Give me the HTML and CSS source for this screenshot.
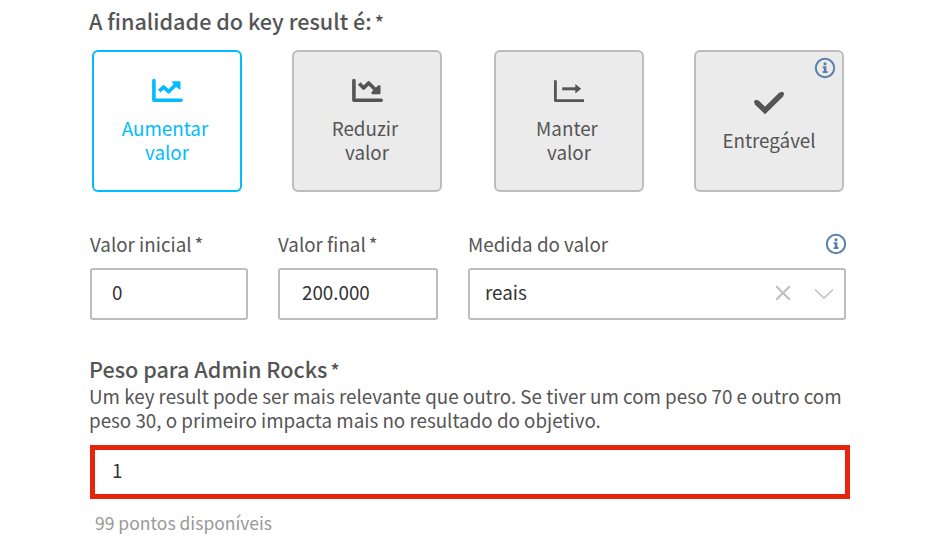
FILE: index.html
```html
<!DOCTYPE html>
<html lang="pt-BR">
<head>
    <meta charset="UTF-8">
    <meta name="viewport" content="width=device-width, initial-scale=1.0">
    <title>Key result</title>
    <link rel="stylesheet" href="styles.css">
</head>
<body>

<form class="form">
    <h2 class="title">A finalidade do key result é:<span class="required">*</span></h2>

    <div class="cards">
        <button type="button" class="card active">
            <svg class="card-icon" width="32" height="26" viewBox="0 0 32 26">
                <path d="M2.9 2.5V22.2H30.2" fill="none" stroke="currentColor" stroke-width="3.6" stroke-linecap="round" stroke-linejoin="round"/>
                <path d="M8.2 13.2L12.6 9L17.6 13.7L25 6.4" fill="none" stroke="currentColor" stroke-width="3.7" stroke-linejoin="round"/>
                <path d="M20.7 3.2H28.6Q29.5 3.2 29.5 4.1V12L26.2 9.8L22.6 6.2Z" fill="currentColor"/>
            </svg>
            <span class="card-label"><span class="word">Aumentar</span><span>valor</span></span>
        </button>
        <button type="button" class="card">
            <svg class="card-icon" width="32" height="26" viewBox="0 0 32 26">
                <path d="M2.9 2.5V22.2H30.2" fill="none" stroke="currentColor" stroke-width="3.6" stroke-linecap="round" stroke-linejoin="round"/>
                <path d="M8.2 5.5L12.6 10L17.6 5L25.5 12.8" fill="none" stroke="currentColor" stroke-width="3.7" stroke-linejoin="round"/>
                <path d="M29.5 7.3V15.3Q29.5 16.2 28.6 16.2H20.6V14L27 7.6Z" fill="currentColor"/>
            </svg>
            <span class="card-label"><span class="word">Reduzir</span><span>valor</span></span>
        </button>
        <button type="button" class="card">
            <svg class="card-icon" width="32" height="26" viewBox="0 0 32 26">
                <path d="M2.4 2.2V22.7H31" fill="none" stroke="currentColor" stroke-width="2.8" stroke-linejoin="round"/>
                <path d="M9.2 10.8H24" fill="none" stroke="currentColor" stroke-width="3"/>
                <path d="M22.3 6L28.2 10.8L22.3 15.6Z" fill="currentColor"/>
            </svg>
            <span class="card-label"><span class="word">Manter</span><span>valor</span></span>
        </button>
        <button type="button" class="card">
            <svg class="info card-info" width="22" height="22" viewBox="0 0 22 22">
                <circle cx="11" cy="11" r="9.2" fill="none" stroke="currentColor" stroke-width="2"/>
                <circle cx="11" cy="6.8" r="1.6" fill="currentColor"/>
                <path d="M8.7 9.3H12.4V14H13.5V15.9H8.7V14H9.8V11.2H8.7Z" fill="currentColor"/>
            </svg>
            <svg class="card-icon" width="32" height="26" viewBox="0 0 32 26">
                <path d="M3.5 12.3L12 20.5L28.5 4.3" fill="none" stroke="currentColor" stroke-width="5.4"/>
                <path d="M3.2 12L4 12.8M28.9 3.9L28.1 4.7" fill="none" stroke="currentColor" stroke-width="4.2" stroke-linecap="round"/>
            </svg>
            <span class="card-label">Entregável</span>
        </button>
    </div>

    <div class="fields">
        <div class="field">
            <label class="label" for="initial">Valor inicial<span class="required">*</span></label>
            <input class="input" id="initial" type="text" value="0">
        </div>
        <div class="field">
            <label class="label" for="final">Valor final<span class="required">*</span></label>
            <input class="input input-final" id="final" type="text" value="200.000">
        </div>
        <div class="field">
            <div class="label-row">
                <span class="label">Medida do valor</span>
                <svg class="info" width="22" height="22" viewBox="0 0 22 22">
                    <circle cx="11" cy="11" r="9.2" fill="none" stroke="currentColor" stroke-width="2"/>
                    <circle cx="11" cy="6.8" r="1.6" fill="currentColor"/>
                    <path d="M8.7 9.3H12.4V14H13.5V15.9H8.7V14H9.8V11.2H8.7Z" fill="currentColor"/>
                </svg>
            </div>
            <div class="select">
                <span class="select-value">reais</span>
                <svg class="clear" width="16" height="16" viewBox="0 0 16 16">
                    <path d="M1.2 1.2L14.8 14.8M14.8 1.2L1.2 14.8" stroke="currentColor" stroke-width="2"/>
                </svg>
                <svg class="arrow" width="20" height="12" viewBox="0 0 20 12">
                    <path d="M1 2.6L10 11.2L19 2.6" fill="none" stroke="currentColor" stroke-width="1.4"/>
                </svg>
            </div>
        </div>
    </div>

    <h2 class="title weight-title">Peso para Admin Rocks<span class="required">*</span></h2>
    <p class="description">Um key result pode ser mais relevante que outro. Se tiver um com peso 70 e outro com peso 30, o primeiro impacta mais no resultado do objetivo.</p>
    <input class="input weight-input" type="text" value="1">
    <p class="hint">99 pontos disponíveis</p>
</form>

</body>
</html>
```
FILE: styles.css
```css
* {
    margin: 0;
    padding: 0;
    box-sizing: border-box;
}

body {
    font-family: 'Noto Sans CJK SC', 'Open Sans', sans-serif;
    font-size: 18.8px;
    line-height: 24px;
    color: #555;
    background: #fff;
}

.form {
    width: 762px;
    margin-left: 89px;
    padding-top: 7px;
}

.title {
    height: 28px;
    font-size: 21.6px;
    font-weight: 500;
    line-height: 28px;
}

.required {
    margin-left: 3px;
    font-size: 18.8px;
    font-weight: 400;
    line-height: 1;
}

.title .required {
    font-weight: 500;
}

.cards {
    display: grid;
    grid-template-columns: 200px 202px 200px 150px;
    margin: 15px 0 0 3px;
}

.card {
    position: relative;
    width: 150px;
    height: 142px;
    display: flex;
    flex-direction: column;
    align-items: center;
    justify-content: center;
    gap: 12px;
    padding-bottom: 1px;
    font: inherit;
    color: #555;
    background: #ebebeb;
    border: 2px solid #bdbdbd;
    border-radius: 6px;
}

.card.active {
    color: #00bcff;
    background: #fff;
    border-color: #00bcff;
}

.card-label {
    display: flex;
    flex-direction: column;
    align-items: center;
}

.word {
    padding-right: 4px;
}

.card-info {
    position: absolute;
    top: 5px;
    right: 6px;
}

.info {
    color: #5b7fab;
}

.fields {
    display: grid;
    grid-template-columns: 158px 160px 378px;
    column-gap: 30px;
    margin: 40px 0 0 1px;
}

.field {
    display: flex;
    flex-direction: column;
    gap: 12px;
}

.label {
    display: block;
    height: 24px;
    line-height: 24px;
}

.label-row {
    display: flex;
    align-items: center;
    justify-content: space-between;
    margin-right: -1px;
}

.input,
.select {
    width: 100%;
    height: 52px;
    padding: 0 20px 6px;
    font: inherit;
    color: #333;
    background: #fff;
    border: 2px solid #bdbdbd;
    border-radius: 3px;
}

.input-final {
    padding-left: 22px;
}

.select {
    display: flex;
    align-items: center;
    padding: 0 10px 2px 15px;
}

.select-value {
    flex: 1;
    padding-bottom: 2px;
}

.clear {
    margin-right: 23px;
    color: #bdbdbd;
}

.arrow {
    color: #bdbdbd;
}

.weight-title {
    margin-top: 35px;
}

.description {
    margin-top: 1px;
}

.weight-input {
    display: block;
    width: 760px;
    height: 54px;
    margin: 13px 0 0 1px;
    padding: 0 17px 5px;
    border: 5px solid #e5240c;
    border-radius: 0;
}

.hint {
    margin: 12px 0 0 6px;
    color: #999;
    font-size: 17.5px;
}
```
